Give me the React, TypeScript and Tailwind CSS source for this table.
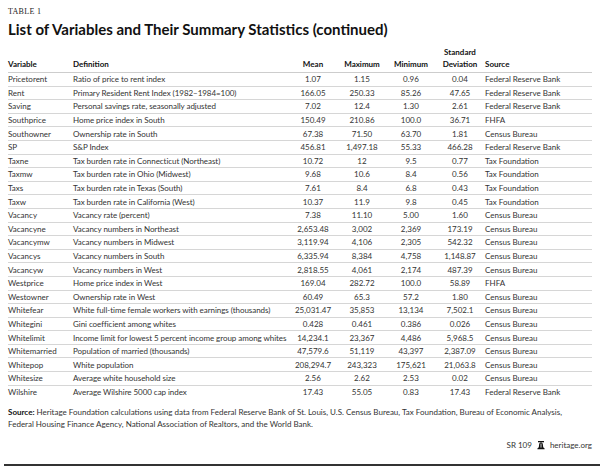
import React from 'react';

// --- TS INTERFACES ---
interface Row {
  name: string;
  def: string;
  mean: string;
  max: string;
  min: string;
  sd: string;
  source: string;
}

const rows: Row[] = [
  { name: 'Pricetorent', def: 'Ratio of price to rent index', mean: '1.07', max: '1.15', min: '0.96', sd: '0.04', source: 'Federal Reserve Bank' },
  { name: 'Rent', def: 'Primary Resident Rent Index (1982–1984=100)', mean: '166.05', max: '250.33', min: '85.26', sd: '47.65', source: 'Federal Reserve Bank' },
  { name: 'Saving', def: 'Personal savings rate, seasonally adjusted', mean: '7.02', max: '12.4', min: '1.30', sd: '2.61', source: 'Federal Reserve Bank' },
  { name: 'Southprice', def: 'Home price index in South', mean: '150.49', max: '210.86', min: '100.0', sd: '36.71', source: 'FHFA' },
  { name: 'Southowner', def: 'Ownership rate in South', mean: '67.38', max: '71.50', min: '63.70', sd: '1.81', source: 'Census Bureau' },
  { name: 'SP', def: 'S&P Index', mean: '456.81', max: '1,497.18', min: '55.33', sd: '466.28', source: 'Federal Reserve Bank' },
  { name: 'Taxne', def: 'Tax burden rate in Connecticut (Northeast)', mean: '10.72', max: '12', min: '9.5', sd: '0.77', source: 'Tax Foundation' },
  { name: 'Taxmw', def: 'Tax burden rate in Ohio (Midwest)', mean: '9.68', max: '10.6', min: '8.4', sd: '0.56', source: 'Tax Foundation' },
  { name: 'Taxs', def: 'Tax burden rate in Texas (South)', mean: '7.61', max: '8.4', min: '6.8', sd: '0.43', source: 'Tax Foundation' },
  { name: 'Taxw', def: 'Tax burden rate in California (West)', mean: '10.37', max: '11.9', min: '9.8', sd: '0.45', source: 'Tax Foundation' },
  { name: 'Vacancy', def: 'Vacancy rate (percent)', mean: '7.38', max: '11.10', min: '5.00', sd: '1.60', source: 'Census Bureau' },
  { name: 'Vacancyne', def: 'Vacancy numbers in Northeast', mean: '2,653.48', max: '3,002', min: '2,369', sd: '173.19', source: 'Census Bureau' },
  { name: 'Vacancymw', def: 'Vacancy numbers in Midwest', mean: '3,119.94', max: '4,106', min: '2,305', sd: '542.32', source: 'Census Bureau' },
  { name: 'Vacancys', def: 'Vacancy numbers in South', mean: '6,335.94', max: '8,384', min: '4,758', sd: '1,148.87', source: 'Census Bureau' },
  { name: 'Vacancyw', def: 'Vacancy numbers in West', mean: '2,818.55', max: '4,061', min: '2,174', sd: '487.39', source: 'Census Bureau' },
  { name: 'Westprice', def: 'Home price index in West', mean: '169.04', max: '282.72', min: '100.0', sd: '58.89', source: 'FHFA' },
  { name: 'Westowner', def: 'Ownership rate in West', mean: '60.49', max: '65.3', min: '57.2', sd: '1.80', source: 'Census Bureau' },
  { name: 'Whitefear', def: 'White full-time female workers with earnings (thousands)', mean: '25,031.47', max: '35,853', min: '13,134', sd: '7,502.1', source: 'Census Bureau' },
  { name: 'Whitegini', def: 'Gini coefficient among whites', mean: '0.428', max: '0.461', min: '0.386', sd: '0.026', source: 'Census Bureau' },
  { name: 'Whitelimit', def: 'Income limit for lowest 5 percent income group among whites', mean: '14,234.1', max: '23,367', min: '4,486', sd: '5,968.5', source: 'Census Bureau' },
  { name: 'Whitemarried', def: 'Population of married (thousands)', mean: '47,579.6', max: '51,119', min: '43,397', sd: '2,387.09', source: 'Census Bureau' },
  { name: 'Whitepop', def: 'White population', mean: '208,294.7', max: '243,323', min: '175,621', sd: '21,063.8', source: 'Census Bureau' },
  { name: 'Whitesize', def: 'Average white household size', mean: '2.56', max: '2.62', min: '2.53', sd: '0.02', source: 'Census Bureau' },
  { name: 'Wilshire', def: 'Average Wilshire 5000 cap index', mean: '17.43', max: '55.05', min: '0.83', sd: '17.43', source: 'Federal Reserve Bank' },
];

// shared column template: Variable | Definition | Mean | Max | Min | SD | Source
const cols = 'grid grid-cols-[65px_215px_50px_48px_50px_48px_1fr]';

function BellIcon() {
  return (
    <svg width="8" height="9" viewBox="0 0 8 9" className="inline-block">
      <rect x="1" y="0" width="6" height="1.3" fill="#111" />
      <rect x="3.3" y="1.3" width="1.4" height="1" fill="#111" />
      <path d="M2.3 2.3 H5.7 L6.2 6.2 L7.6 7.4 V8.2 H0.4 V7.4 L1.8 6.2 Z" fill="#111" />
      <rect x="3.6" y="3" width="0.8" height="3.6" fill="#fff" />
    </svg>
  );
}

export default function App() {
  return (
    <div className="w-[600px] h-[466px] bg-white px-2 overflow-hidden text-[#333] font-['Lato',sans-serif]">
      {/* Caption + title */}
      <div className="pt-[7px] text-[8px] leading-[10px] tracking-[0.3px] text-[#222] font-['Liberation_Serif',serif]">TABLE 1</div>
      <h1 className="mt-[3px] text-[15px] leading-[18px] font-bold text-[#111]">
        List of Variables and Their Summary Statistics (continued)
      </h1>

      {/* Header row */}
      <div className={`${cols} mt-[8px] items-end pb-[2px] border-b border-[#cdcdcd] text-[8px] leading-[12px] font-bold text-[#111]`}>
        <span>Variable</span>
        <span>Definition</span>
        <span className="text-center">Mean</span>
        <span className="text-center">Maximum</span>
        <span className="text-center">Minimum</span>
        <span className="text-center">Standard<br />Deviation</span>
        <span className="pl-px">Source</span>
      </div>

      {/* Data rows */}
      <div className="flex flex-col">
        {rows.map((r, i) => (
          <div
            key={r.name}
            className={`${cols} h-[13.6px] items-center text-[8px] leading-[12px] whitespace-nowrap ${i < rows.length - 1 ? 'border-b border-[#d6d6d6]' : ''}`}
          >
            <span>{r.name}</span>
            <span className="tracking-[-0.05px]">{r.def}</span>
            <span className="text-center">{r.mean}</span>
            <span className="text-center">{r.max}</span>
            <span className="text-center">{r.min}</span>
            <span className="text-center">{r.sd}</span>
            <span className="pl-px">{r.source}</span>
          </div>
        ))}
      </div>

      {/* Footnote */}
      <p className="mt-[7px] text-[8px] leading-[12px] text-[#333]">
        <b className="font-bold text-[#111]">Source:</b> Heritage Foundation calculations using data from Federal Reserve Bank of St. Louis, U.S. Census Bureau, Tax Foundation, Bureau of Economic Analysis,
        <br />
        Federal Housing Finance Agency, National Association of Realtors, and the World Bank.
      </p>

      <div className="mt-[9px] flex justify-end items-center gap-[5px] text-[8px] leading-[12px] text-[#333]">
        <span>SR 109</span>
        <BellIcon />
        <span>heritage.org</span>
      </div>

      {/* Bottom rule */}
      <div className="mt-[13px] ml-[-4px] w-[596px] h-[2px] bg-[#333]" />
    </div>
  );
}
